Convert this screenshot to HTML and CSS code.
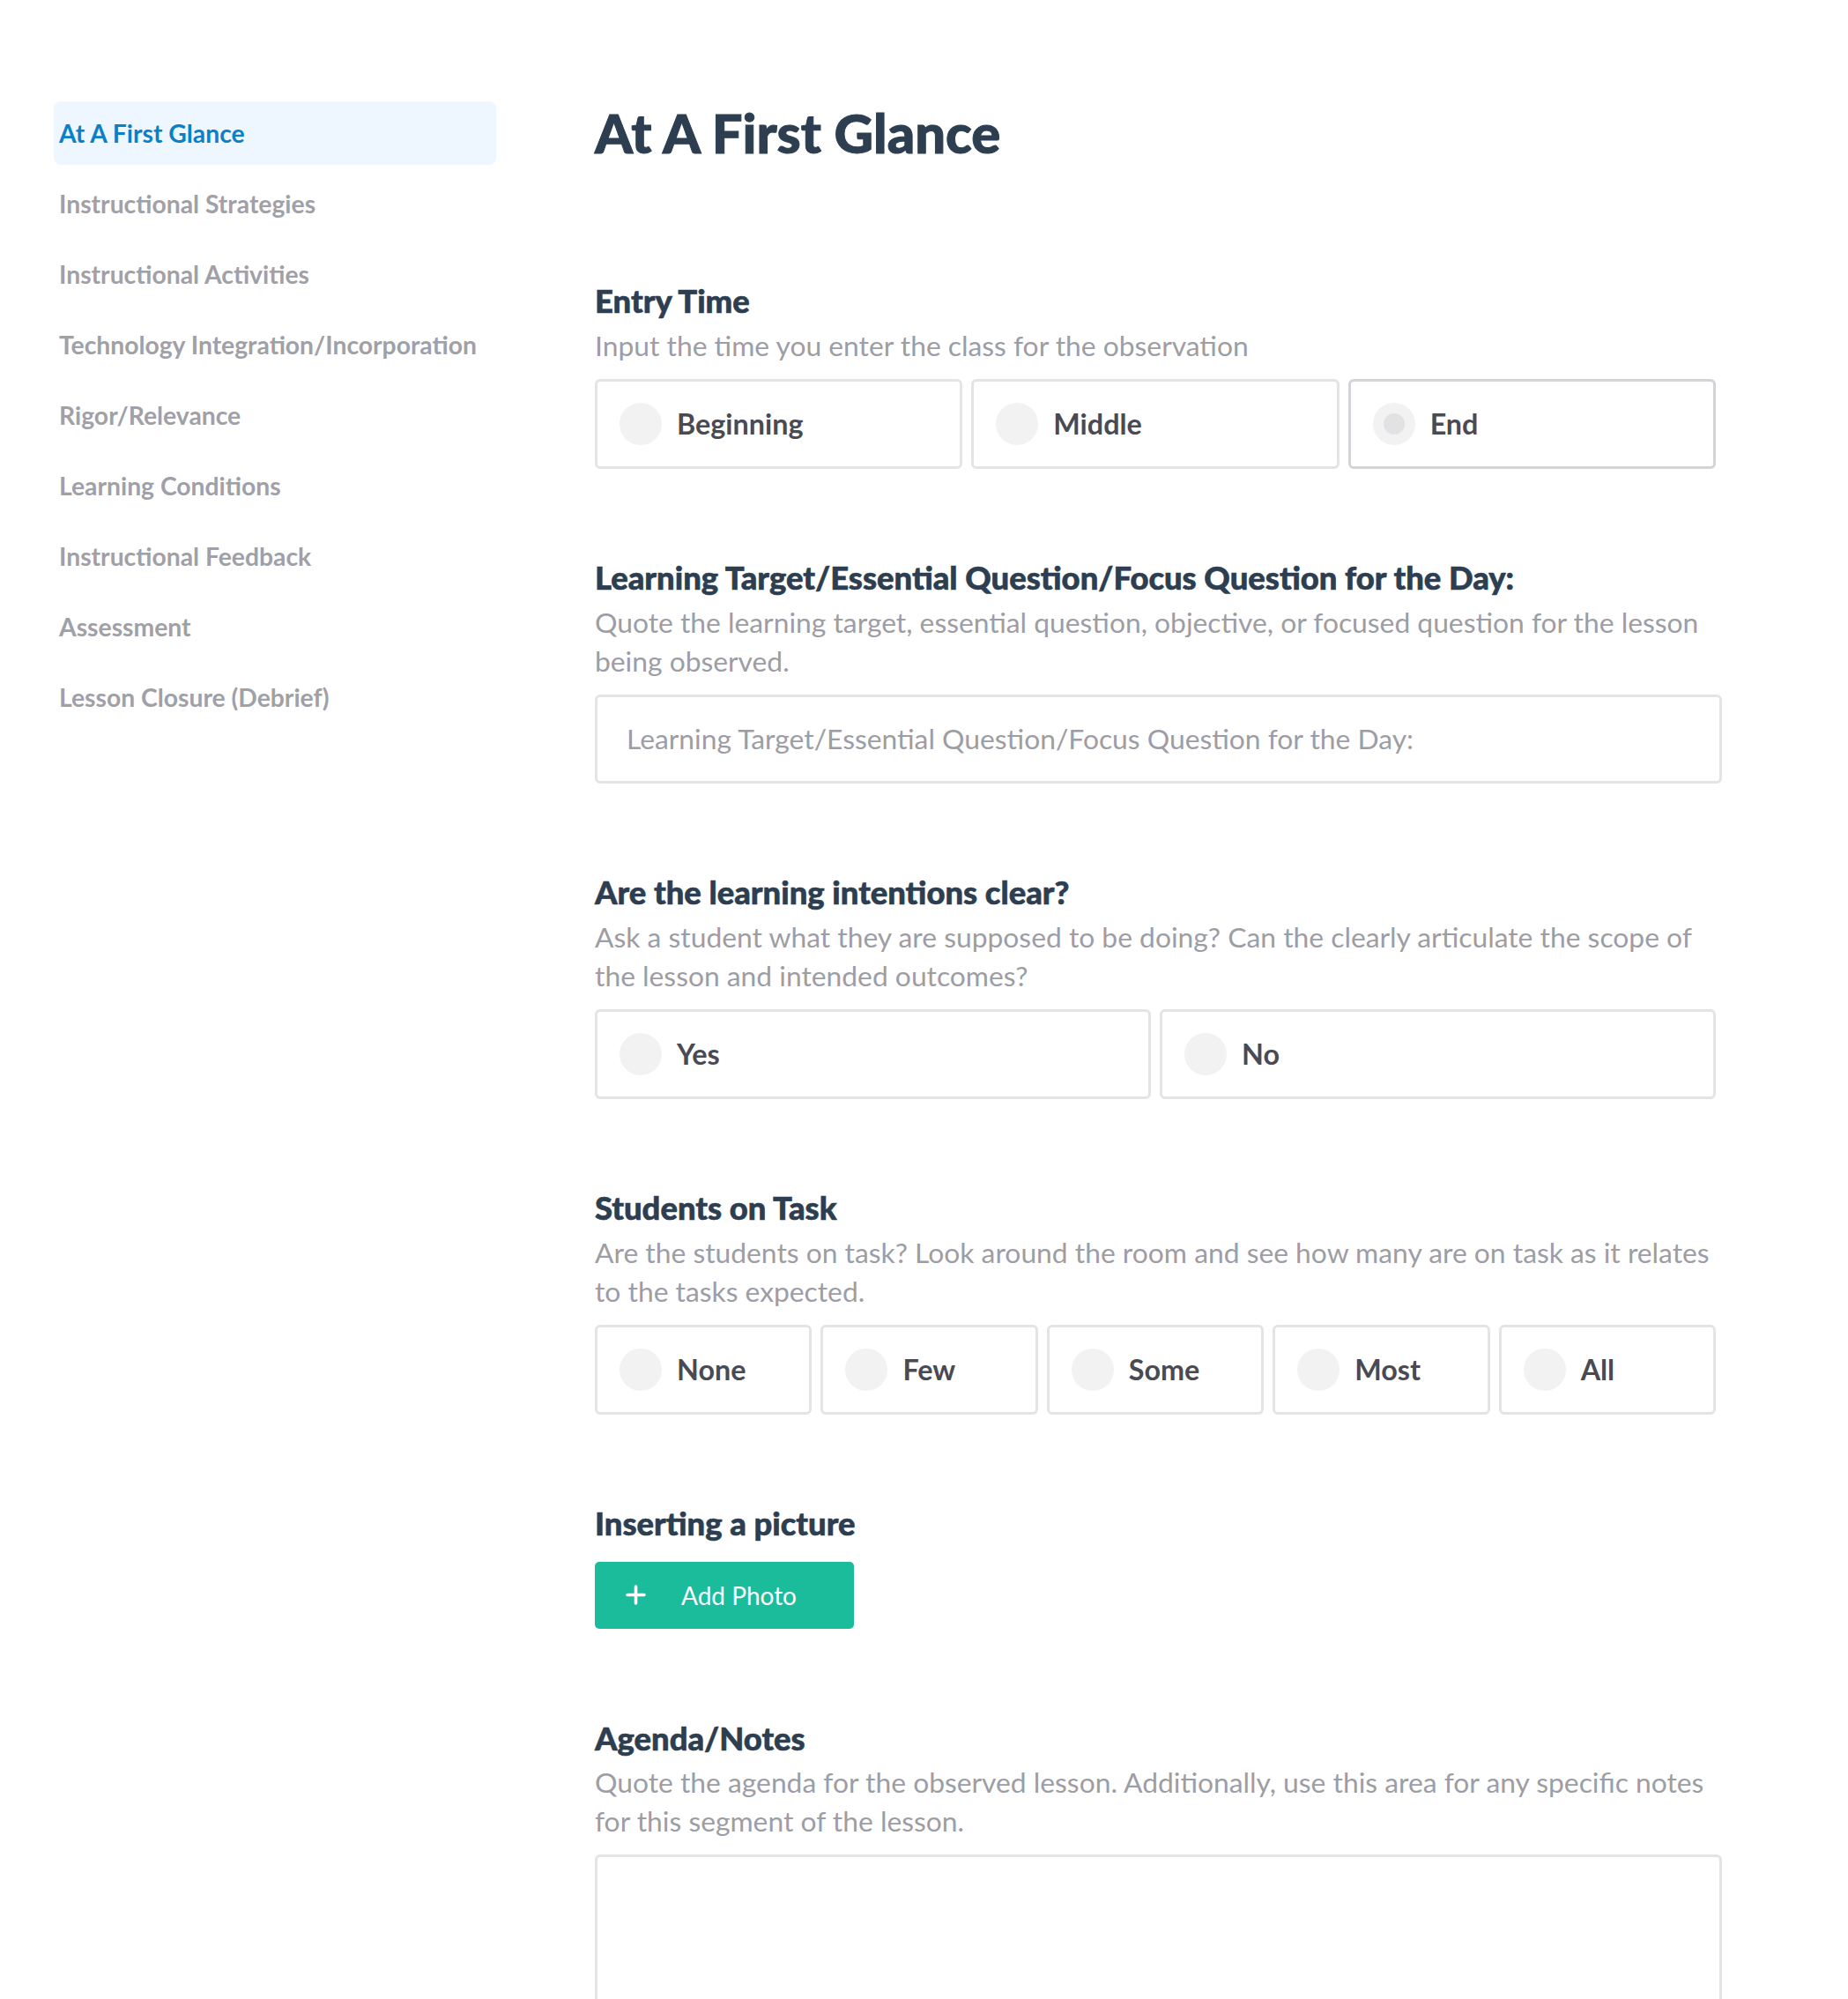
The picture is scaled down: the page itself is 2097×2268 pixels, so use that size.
FILE: index.html
```html
<!DOCTYPE html>
<html lang="en">
<head>
<meta charset="utf-8">
<title>At A First Glance</title>
<link rel="stylesheet" href="styles.css">
</head>
<body>
<div class="page">
  <nav class="sidebar">
    <a class="nav-item active">At A First Glance</a>
    <a class="nav-item">Instructional Strategies</a>
    <a class="nav-item">Instructional Activities</a>
    <a class="nav-item">Technology Integration/Incorporation</a>
    <a class="nav-item">Rigor/Relevance</a>
    <a class="nav-item">Learning Conditions</a>
    <a class="nav-item">Instructional Feedback</a>
    <a class="nav-item">Assessment</a>
    <a class="nav-item">Lesson Closure (Debrief)</a>
  </nav>
  <main class="main">
    <h1 class="title">At A First Glance</h1>

    <section class="section">
      <h2 class="q-title">Entry Time</h2>
      <p class="q-desc">Input the time you enter the class for the observation</p>
      <div class="options">
        <div class="option"><span class="radio"></span><span class="opt-label">Beginning</span></div>
        <div class="option"><span class="radio"></span><span class="opt-label">Middle</span></div>
        <div class="option selected"><span class="radio"><span class="dot"></span></span><span class="opt-label">End</span></div>
      </div>
    </section>

    <section class="section">
      <h2 class="q-title">Learning Target/Essential Question/Focus Question for the Day:</h2>
      <p class="q-desc">Quote the learning target, essential question, objective, or focused question for the lesson being observed.</p>
      <div class="text-input"><span class="placeholder">Learning Target/Essential Question/Focus Question for the Day:</span></div>
    </section>

    <section class="section">
      <h2 class="q-title">Are the learning intentions clear?</h2>
      <p class="q-desc">Ask a student what they are supposed to be doing? Can the clearly articulate the scope of the lesson and intended outcomes?</p>
      <div class="options">
        <div class="option"><span class="radio"></span><span class="opt-label">Yes</span></div>
        <div class="option"><span class="radio"></span><span class="opt-label">No</span></div>
      </div>
    </section>

    <section class="section">
      <h2 class="q-title">Students on Task</h2>
      <p class="q-desc">Are the students on task? Look around the room and see how many are on task as it relates to the tasks expected.</p>
      <div class="options">
        <div class="option"><span class="radio"></span><span class="opt-label">None</span></div>
        <div class="option"><span class="radio"></span><span class="opt-label">Few</span></div>
        <div class="option"><span class="radio"></span><span class="opt-label">Some</span></div>
        <div class="option"><span class="radio"></span><span class="opt-label">Most</span></div>
        <div class="option"><span class="radio"></span><span class="opt-label">All</span></div>
      </div>
    </section>

    <section class="section">
      <h2 class="q-title">Inserting a picture</h2>
      <button class="add-photo" type="button">
        <svg class="plus" width="23" height="23" viewBox="0 0 23 23"><path d="M11.5 2v19M2 11.5h19" stroke="#fff" stroke-width="3.6" stroke-linecap="round" fill="none"/></svg>
        <span>Add Photo</span>
      </button>
    </section>

    <section class="section">
      <h2 class="q-title">Agenda/Notes</h2>
      <p class="q-desc">Quote the agenda for the observed lesson. Additionally, use this area for any specific notes for this segment of the lesson.</p>
      <div class="text-area"></div>
    </section>
  </main>
</div>
</body>
</html>
```

FILE: styles.css
```css
* { box-sizing: border-box; }

html, body {
  margin: 0;
  padding: 0;
  background: #ffffff;
}

body {
  font-family: Lato, "Open Sans", "Liberation Sans", sans-serif;
  overflow: hidden;
}

.page {
  display: flex;
  align-items: flex-start;
  gap: 112px;
  padding: 115px 0 0 61px;
}

.sidebar {
  width: 502px;
  flex: none;
  display: flex;
  flex-direction: column;
  gap: 8px;
}

.nav-item {
  display: flex;
  align-items: center;
  height: 72px;
  padding-left: 6px;
  border-radius: 8px;
  font-size: 28.3px;
  font-weight: 700;
  color: #a0a0a8;
  text-decoration: none;
}

.nav-item.active {
  background: #eef7ff;
  color: #0a80c6;
}

.main {
  width: 1279px;
  flex: none;
}

.title {
  margin: -2px 0 134px;
  font-size: 61.5px;
  line-height: 74px;
  font-weight: 900;
  color: #2c3e50;
  -webkit-text-stroke: 1px #2c3e50;
}

.section {
  margin-bottom: 103.6px;
}

.q-title {
  margin: 0 0 8px;
  font-size: 36.4px;
  line-height: 41.8px;
  font-weight: 900;
  color: #2c3e50;
  -webkit-text-stroke: 0.6px #2c3e50;
}

.q-desc {
  margin: 0 0 15px;
  max-width: 1272px;
  font-size: 31.8px;
  line-height: 43.8px;
  font-weight: 400;
  color: #9d9da5;
}

.options {
  display: flex;
  gap: 10px;
  margin-right: 7px;
}

.option {
  flex: 1 1 0;
  display: flex;
  align-items: center;
  height: 102px;
  padding-left: 25px;
  border: 3px solid #e4e4e4;
  border-radius: 6px;
  background: #fff;
}

.option.selected {
  border-color: #d4d4d8;
}

.radio {
  flex: none;
  width: 48px;
  height: 48px;
  border-radius: 50%;
  background: #f2f2f2;
  display: flex;
  align-items: center;
  justify-content: center;
}

.dot {
  width: 24px;
  height: 24px;
  border-radius: 50%;
  background: #e2e2e4;
}

.opt-label {
  margin-left: 17px;
  font-size: 32.3px;
  font-weight: 700;
  color: #4a4a53;
}

.text-input {
  display: flex;
  align-items: center;
  height: 101px;
  padding-left: 33px;
  border: 3px solid #e4e4e4;
  border-radius: 6px;
}

.placeholder {
  font-size: 31.8px;
  color: #9d9da5;
}

.add-photo {
  display: flex;
  align-items: center;
  margin-top: 22px;
  width: 294px;
  height: 76px;
  padding: 0 0 0 35px;
  border: 0;
  border-radius: 5px;
  background: #1abc9c;
  color: #ffffff;
  font-family: inherit;
  font-size: 28px;
  font-weight: 400;
  cursor: pointer;
}

.add-photo .plus {
  flex: none;
  margin-right: 40px;
}

.text-area {
  height: 260px;
  border: 3px solid #e4e4e4;
  border-radius: 6px;
}
```
